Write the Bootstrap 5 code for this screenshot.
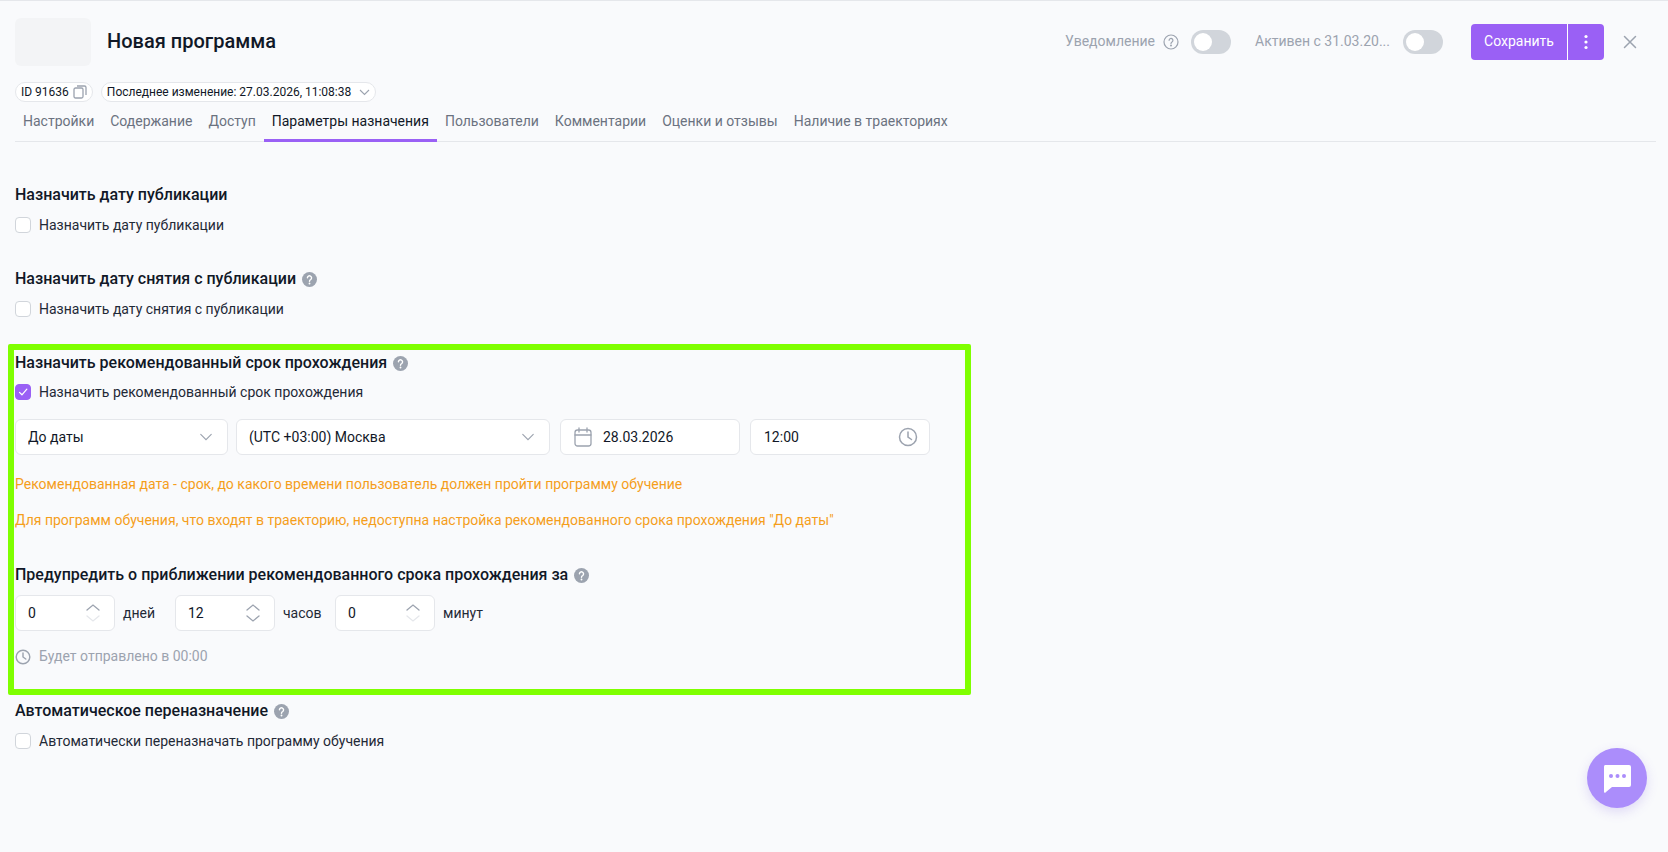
<!DOCTYPE html>
<html lang="ru">
<head>
<meta charset="utf-8">
<title>Новая программа</title>
<link href="https://cdn.jsdelivr.net/npm/bootstrap@5.3.0/dist/css/bootstrap.min.css" rel="stylesheet">
<style>
html,body{height:100%}
body{background:#f9fafc;font-family:Roboto,"Liberation Sans",sans-serif;font-size:14px;color:#111827;border-top:1px solid #e5e7eb;overflow:hidden}
.page-wrap{padding:0 12px 0 15px;position:relative;height:851px}
.head-row{height:81px;padding-top:17px}
.thumb{width:76px;height:48px;background:#f3f4f6;border-radius:6px;margin-right:16px;flex:none}
.prog-title{font-size:20px;font-weight:500;margin:0;color:#111827;position:relative;top:-1px}
.muted-label{color:#9ca3af;font-size:14px;position:relative;top:-1px}
.toggle-sw{width:40px;height:24px;background:#d1d5db;border-radius:12px;padding:3px;flex:none}
.toggle-sw span{display:block;width:18px;height:18px;background:#fff;border-radius:50%}
.trunc{width:140px}
.btn-save{background:#9a60f5;color:#fff;border:0;height:36px;font-size:14px;padding:0 12px;border-radius:4px 0 0 4px;width:96px}
.btn-save:hover{background:#9a60f5;color:#fff}
.btn-more{background:#9a60f5;border:0;border-left:1px solid #fff;height:36px;width:37px;padding:0;border-radius:0 4px 4px 0;margin-left:0!important}
.btn-more:hover{background:#9a60f5}
.pill-chip{height:20px;border:1px solid #e5e7eb;border-radius:10px;background:#fff;font-size:12px;padding:0 5px;color:#111827}
.tabs-bar{border-bottom:1px solid #e5e7eb}
.tabs-bar .nav-link{color:#6b7280;font-size:14px;padding:10px 8px 7px;height:40px;line-height:18px;border:0;border-bottom:3px solid transparent;margin-bottom:-1px;background:none;border-radius:0}
.tabs-bar .nav-link.active{color:#111827;border-bottom-color:#9a60f5}
.sec-title{font-size:16px;font-weight:500;color:#111827;line-height:20px;margin:0}
.help-dot{width:15px;height:15px;flex:none;margin-left:2px}
.form-check.chk-line{min-height:16px;padding-left:0;margin:0;line-height:18px;display:flex;align-items:center}
.chk-line .form-check-input{width:16px;height:16px;margin:0 8px 0 0;float:none;border:1px solid #d1d5db;border-radius:4px;background-color:#fff;flex:none}
.chk-line .form-check-input:checked{background-color:#9a60f5;border-color:#9a60f5;background-image:url("data:image/svg+xml,%3csvg xmlns='http://www.w3.org/2000/svg' viewBox='0 0 20 20'%3e%3cpath fill='none' stroke='%23fff' stroke-linecap='round' stroke-linejoin='round' stroke-width='1.800' d='M5 10.500l3.500 3.500 7-8'/%3e%3c/svg%3e")}
.chk-line .form-check-label{color:#1f2937;font-size:14px}
.sect-a{padding-top:43px}
.sect-b{padding-top:35px}
.green-box{border:6px solid #7fff00;border-radius:2px;width:963px;height:351px;margin:26px 0 0 -7px;padding:3px 0 0 1px}
.field-box{height:36px;border:1px solid #e5e7eb;border-radius:6px;background-color:#fff;font-size:14px;color:#111827}
.form-select.field-box{padding:0 12px;background-repeat:no-repeat;background-size:18px 14px;background-position:right 12px center;background-image:url("data:image/svg+xml,%3csvg xmlns='http://www.w3.org/2000/svg' viewBox='0 0 16 16'%3e%3cpath fill='none' stroke='%239ca3af' stroke-linecap='round' stroke-width='1.3' d='M2 5l6 6 6-6'/%3e%3c/svg%3e")}
.w-a{width:213px}.w-b{width:314px}.w-c{width:180px}
.note-or{color:#f59e1b;font-size:14px;margin:0;line-height:20px}
.spin-box{width:100px;padding:0 0 0 12px}
.spin-arrows{width:16px;margin-right:13px}
.spin-arrows svg{display:block}
.unit-t{color:#1f2937;width:52px;margin-left:8px}
.sent-t{color:#9ca3af}
.chat-fab{position:absolute;left:1587px;top:747px;width:60px;height:60px;border-radius:50%;background:#ab8dfb;box-shadow:0 4px 12px rgba(120,90,220,.2)}
</style>
</head>
<body>
<div class="page-wrap">
  <div class="head-row d-flex">
    <div class="thumb"></div>
    <div class="d-flex align-items-center" style="height:48px"><h1 class="prog-title">Новая программа</h1></div>
    <div class="ms-auto d-flex align-items-start">
      <div class="d-flex align-items-center" style="height:48px">
        <span class="muted-label">Уведомление</span>
        <svg class="ms-2" width="16" height="16" viewBox="0 0 16 16" fill="none" stroke="#9ca3af" stroke-width="1.2"><circle cx="8" cy="8" r="7"/><path d="M6.100 6.300a1.900 1.900 0 1 1 2.900 1.600c-.6.400-1 .7-1 1.500" stroke-linecap="round"/><circle cx="8" cy="11.400" r=".4" fill="#9ca3af"/></svg>
        <div class="toggle-sw" style="margin:0 24px 0 12px"><span></span></div>
        <span class="muted-label trunc">Активен с 31.03.20...</span>
        <div class="toggle-sw ms-2"><span></span></div>
        <div class="btn-group d-flex" style="margin-left:28px;margin-top:-1px">
          <button class="btn btn-save" type="button">Сохранить</button>
          <button class="btn btn-more d-flex align-items-center justify-content-center" type="button" aria-label="Ещё"><svg width="4" height="16" viewBox="0 0 4 16" fill="#fff"><circle cx="2" cy="2.500" r="1.600"/><circle cx="2" cy="8" r="1.600"/><circle cx="2" cy="13.500" r="1.600"/></svg></button>
        </div>
        <svg style="margin:-1px 19px 0 19px" width="14" height="14" viewBox="0 0 14 14" stroke="#9ca3af" stroke-width="1.500" stroke-linecap="round"><path d="M1.500 1.500l11 11M12.500 1.500l-11 11"/></svg>
      </div>
    </div>
  </div>
  <div class="d-flex gap-2">
    <div class="pill-chip d-flex align-items-center gap-1">ID 91636
      <svg width="14" height="14" viewBox="0 0 14 14" fill="none" stroke="#9ca3af" stroke-width="1.300"><rect x="1" y="3" width="9" height="10" rx="1.500"/><path d="M4 1h7.500A1.500 1.500 0 0 1 13 2.500V10"/></svg>
    </div>
    <div class="pill-chip d-flex align-items-center gap-1">Последнее изменение: 27.03.2026, 11:08:38
      <svg class="ms-1" width="11" height="7" viewBox="0 0 11 7" fill="none" stroke="#9ca3af" stroke-width="1.100"><path d="M1 1l4.500 4.500L10 1"/></svg>
    </div>
  </div>
  <ul class="nav tabs-bar">
    <li class="nav-item"><a class="nav-link" href="#">Настройки</a></li>
    <li class="nav-item"><a class="nav-link" href="#">Содержание</a></li>
    <li class="nav-item"><a class="nav-link" href="#">Доступ</a></li>
    <li class="nav-item"><a class="nav-link active" href="#">Параметры назначения</a></li>
    <li class="nav-item"><a class="nav-link" href="#">Пользователи</a></li>
    <li class="nav-item"><a class="nav-link" href="#">Комментарии</a></li>
    <li class="nav-item"><a class="nav-link" href="#">Оценки и отзывы</a></li>
    <li class="nav-item"><a class="nav-link" href="#">Наличие в траекториях</a></li>
  </ul>

  <section class="sect-a">
    <h2 class="sec-title" style="margin-bottom:11px">Назначить дату публикации</h2>
    <div class="form-check chk-line"><input class="form-check-input" type="checkbox" id="c1"><label class="form-check-label" for="c1">Назначить дату публикации</label></div>
  </section>
  <section class="sect-b">
    <h2 class="sec-title d-flex align-items-center gap-1" style="margin-bottom:11px">Назначить дату снятия с публикации <svg class="help-dot" viewBox="0 0 16 16"><use href="#hq"/></svg></h2>
    <div class="form-check chk-line"><input class="form-check-input" type="checkbox" id="c2"><label class="form-check-label" for="c2">Назначить дату снятия с публикации</label></div>
  </section>

  <section class="green-box">
    <h2 class="sec-title d-flex align-items-center gap-1" style="margin-bottom:10px">Назначить рекомендованный срок прохождения <svg class="help-dot" viewBox="0 0 16 16"><use href="#hq"/></svg></h2>
    <div class="form-check chk-line"><input class="form-check-input" type="checkbox" id="c3" checked><label class="form-check-label" for="c3">Назначить рекомендованный срок прохождения</label></div>
    <div class="d-flex gap-2" style="margin-top:18px">
      <select class="form-select field-box w-a"><option>До даты</option></select>
      <select class="form-select field-box w-b"><option>(UTC +03:00) Москва</option></select>
      <div class="field-box w-c d-flex align-items-center" style="margin-left:2px;padding:0 13px">
        <svg width="18" height="20" viewBox="0 0 18 20" fill="none" stroke="#9ca3af" stroke-width="1.300" stroke-linecap="round"><rect x="1" y="3" width="16" height="16" rx="2.500"/><path d="M1 8h16M5 1v4M13 1v4"/></svg>
        <span style="margin-left:11px">28.03.2026</span>
      </div>
      <div class="field-box w-c d-flex align-items-center justify-content-between" style="margin-left:2px;padding:0 11px 0 13px">
        <span>12:00</span>
        <svg width="20" height="20" viewBox="0 0 20 20" fill="none" stroke="#9ca3af" stroke-width="1.500" stroke-linecap="round"><circle cx="10" cy="10" r="8.500"/><path d="M10 5v5l3.500 2.500"/></svg>
      </div>
    </div>
    <p class="note-or" style="margin-top:19px">Рекомендованная дата - срок, до какого времени пользователь должен пройти программу обучение</p>
    <p class="note-or" style="margin-top:16px">Для программ обучения, что входят в траекторию, недоступна настройка рекомендованного срока прохождения "До даты"</p>
    <h2 class="sec-title d-flex align-items-center gap-1" style="margin-top:35px;margin-bottom:10px">Предупредить о приближении рекомендованного срока прохождения за <svg class="help-dot" viewBox="0 0 16 16"><use href="#hq"/></svg></h2>
    <div class="d-flex align-items-center">
      <div class="field-box spin-box d-flex align-items-center justify-content-between"><span>0</span><span class="spin-arrows"><svg width="16" height="20" viewBox="0 0 16 20" fill="none" stroke-width="1.300" stroke-linecap="round"><path d="M2 7l6-5 6 5" stroke="#9ca3af"/><path d="M2 13l6 5 6-5" stroke="#e5e7eb"/></svg></span></div>
      <span class="unit-t">дней</span>
      <div class="field-box spin-box d-flex align-items-center justify-content-between"><span>12</span><span class="spin-arrows"><svg width="16" height="20" viewBox="0 0 16 20" fill="none" stroke-width="1.300" stroke-linecap="round"><path d="M2 7l6-5 6 5" stroke="#9ca3af"/><path d="M2 13l6 5 6-5" stroke="#9ca3af"/></svg></span></div>
      <span class="unit-t">часов</span>
      <div class="field-box spin-box d-flex align-items-center justify-content-between"><span>0</span><span class="spin-arrows"><svg width="16" height="20" viewBox="0 0 16 20" fill="none" stroke-width="1.300" stroke-linecap="round"><path d="M2 7l6-5 6 5" stroke="#9ca3af"/><path d="M2 13l6 5 6-5" stroke="#e5e7eb"/></svg></span></div>
      <span class="unit-t">минут</span>
    </div>
    <div class="d-flex align-items-center gap-2 sent-t" style="margin-top:15px">
      <svg width="16" height="16" viewBox="0 0 20 20" fill="none" stroke="#9ca3af" stroke-width="1.800" stroke-linecap="round"><circle cx="10" cy="10" r="8.500"/><path d="M10 5v5l3.500 2.500"/></svg>
      <span>Будет отправлено в 00:00</span>
    </div>
  </section>

  <section style="padding-top:6px">
    <h2 class="sec-title d-flex align-items-center gap-1" style="margin-bottom:11px">Автоматическое переназначение <svg class="help-dot" viewBox="0 0 16 16"><use href="#hq"/></svg></h2>
    <div class="form-check chk-line"><input class="form-check-input" type="checkbox" id="c4"><label class="form-check-label" for="c4">Автоматически переназначать программу обучения</label></div>
  </section>

  <div class="chat-fab d-flex align-items-center justify-content-center">
    <svg width="32" height="32" viewBox="0 0 32 32"><path d="M4 3h24a2 2 0 0 1 2 2v18a2 2 0 0 1-2 2H11l-6 5a1 1 0 0 1-2-.6V5a2 2 0 0 1 1-2z" fill="#fff"/><circle cx="10" cy="14" r="2" fill="#ab8dfb"/><circle cx="16.500" cy="14" r="2" fill="#ab8dfb"/><circle cx="23" cy="14" r="2" fill="#ab8dfb"/></svg>
  </div>
</div>
<svg width="0" height="0" class="position-absolute"><defs><symbol id="hq" viewBox="0 0 16 16"><circle cx="8" cy="8" r="8" fill="#9ca3af"/><path d="M5.800 6.200a2.200 2.200 0 1 1 3.500 1.800c-.8.500-1.300.9-1.300 1.800" fill="none" stroke="#fff" stroke-width="1.500" stroke-linecap="round"/><circle cx="8" cy="12.300" r="1" fill="#fff"/></symbol></defs></svg>
<script src="https://cdn.jsdelivr.net/npm/bootstrap@5.3.0/dist/js/bootstrap.bundle.min.js"></script>
</body>
</html>
